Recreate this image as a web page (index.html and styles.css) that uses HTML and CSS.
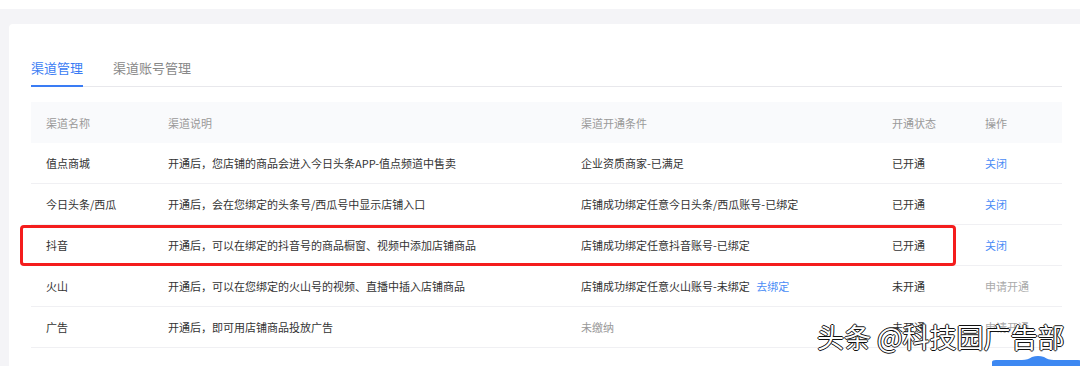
FILE: index.html
```html
<!DOCTYPE html>
<html>
<head>
  <title>渠道管理</title>
  <link rel="stylesheet" href="styles.css">
</head>
<body>
  <div class="page">
    <div class="card">
      <div class="tabs">
        <span class="tab active">渠道管理</span>
        <span class="tab">渠道账号管理</span>
      </div>
      <div class="table">
        <div class="row head">
          <span>渠道名称</span>
          <span>渠道说明</span>
          <span>渠道开通条件</span>
          <span>开通状态</span>
          <span>操作</span>
        </div>
        <div class="row">
          <span>值点商城</span>
          <span>开通后，您店铺的商品会进入今日头条APP-值点频道中售卖</span>
          <span>企业资质商家-已满足</span>
          <span>已开通</span>
          <span><a class="link">关闭</a></span>
        </div>
        <div class="row">
          <span>今日头条/西瓜</span>
          <span>开通后，会在您绑定的头条号/西瓜号中显示店铺入口</span>
          <span>店铺成功绑定任意今日头条/西瓜账号-已绑定</span>
          <span>已开通</span>
          <span><a class="link">关闭</a></span>
        </div>
        <div class="row marked">
          <span>抖音</span>
          <span>开通后，可以在绑定的抖音号的商品橱窗、视频中添加店铺商品</span>
          <span>店铺成功绑定任意抖音账号-已绑定</span>
          <span>已开通</span>
          <span><a class="link">关闭</a></span>
        </div>
        <div class="row">
          <span>火山</span>
          <span>开通后，可以在您绑定的火山号的视频、直播中插入店铺商品</span>
          <span>店铺成功绑定任意火山账号-未绑定 <a class="link bind">去绑定</a></span>
          <span>未开通</span>
          <span class="muted">申请开通</span>
        </div>
        <div class="row">
          <span>广告</span>
          <span>开通后，即可用店铺商品投放广告</span>
          <span class="grey">未缴纳</span>
          <span>未开通</span>
          <span class="muted">申请开通</span>
        </div>
      </div>
    </div>
  </div>
  <div class="watermark">头条 @科技园广告部</div>
  <svg class="badge" width="90" height="12" viewBox="0 0 90 12">
    <path d="M0 12 L0 6 Q0 4 4 4 L30 4 Q36 4 40 1 Q46 -1 52 1 Q56 4 62 4 L86 4 Q90 4 90 8 L90 12 Z" fill="#3d88f2"/>
  </svg>
</body>
</html>
```

FILE: styles.css
```css
body {
  margin: 0;
  width: 1080px;
  height: 366px;
  overflow: hidden;
  background: #ffffff;
  font-family: "Noto Sans CJK SC", "Noto Sans", sans-serif;
  position: relative;
}

.page {
  margin-top: 9px;
  padding: 15px 0 0 9px;
  background: #f4f4f7;
  height: 342px;
}

.card {
  background: #ffffff;
  border-radius: 4px 0 0 0;
  height: 100%;
  padding: 0 18px 0 22px;
}

.tabs {
  display: flex;
  gap: 30px;
  padding-top: 34px;
  border-bottom: 1px solid #e8e8ec;
  margin-bottom: 15px;
}

.tab {
  font-size: 13px;
  line-height: 20px;
  color: #888;
  padding-bottom: 7px;
  border-bottom: 2px solid transparent;
  margin-bottom: -1px;
}

.tab.active {
  color: #3a7cf4;
  border-bottom-color: #3a7cf4;
}

.row {
  display: grid;
  grid-template-columns: 122px 413px 311px 93px 92px;
  height: 40px;
  align-items: center;
  font-size: 11px;
  color: #333;
  border-bottom: 1px solid #f0f0f3;
}

.row span {
  padding-left: 15px;
  white-space: nowrap;
}

.row.head {
  background: #f9fafc;
  color: #999;
  height: 41px;
  border-bottom: none;
}

.link {
  color: #4a8cf6;
}

.bind {
  margin-left: 4px;
}

.grey {
  color: #999;
}

.muted {
  color: #aaa;
}

.marked {
  position: relative;
}

.marked::after {
  content: "";
  position: absolute;
  left: -11px;
  right: 106px;
  top: 0;
  bottom: -1px;
  border: 3px solid #f41d1d;
  border-radius: 4px;
}

.watermark {
  position: absolute;
  left: 817px;
  top: 322px;
  font-size: 27px;
  line-height: 30px;
  color: #ffffff;
  text-shadow: -1px 0 0 #111, 1px 0 0 #111, 0 -1px 0 #111, 0 1px 0 #111;
}

.badge {
  position: absolute;
  left: 992px;
  top: 356px;
}
```
